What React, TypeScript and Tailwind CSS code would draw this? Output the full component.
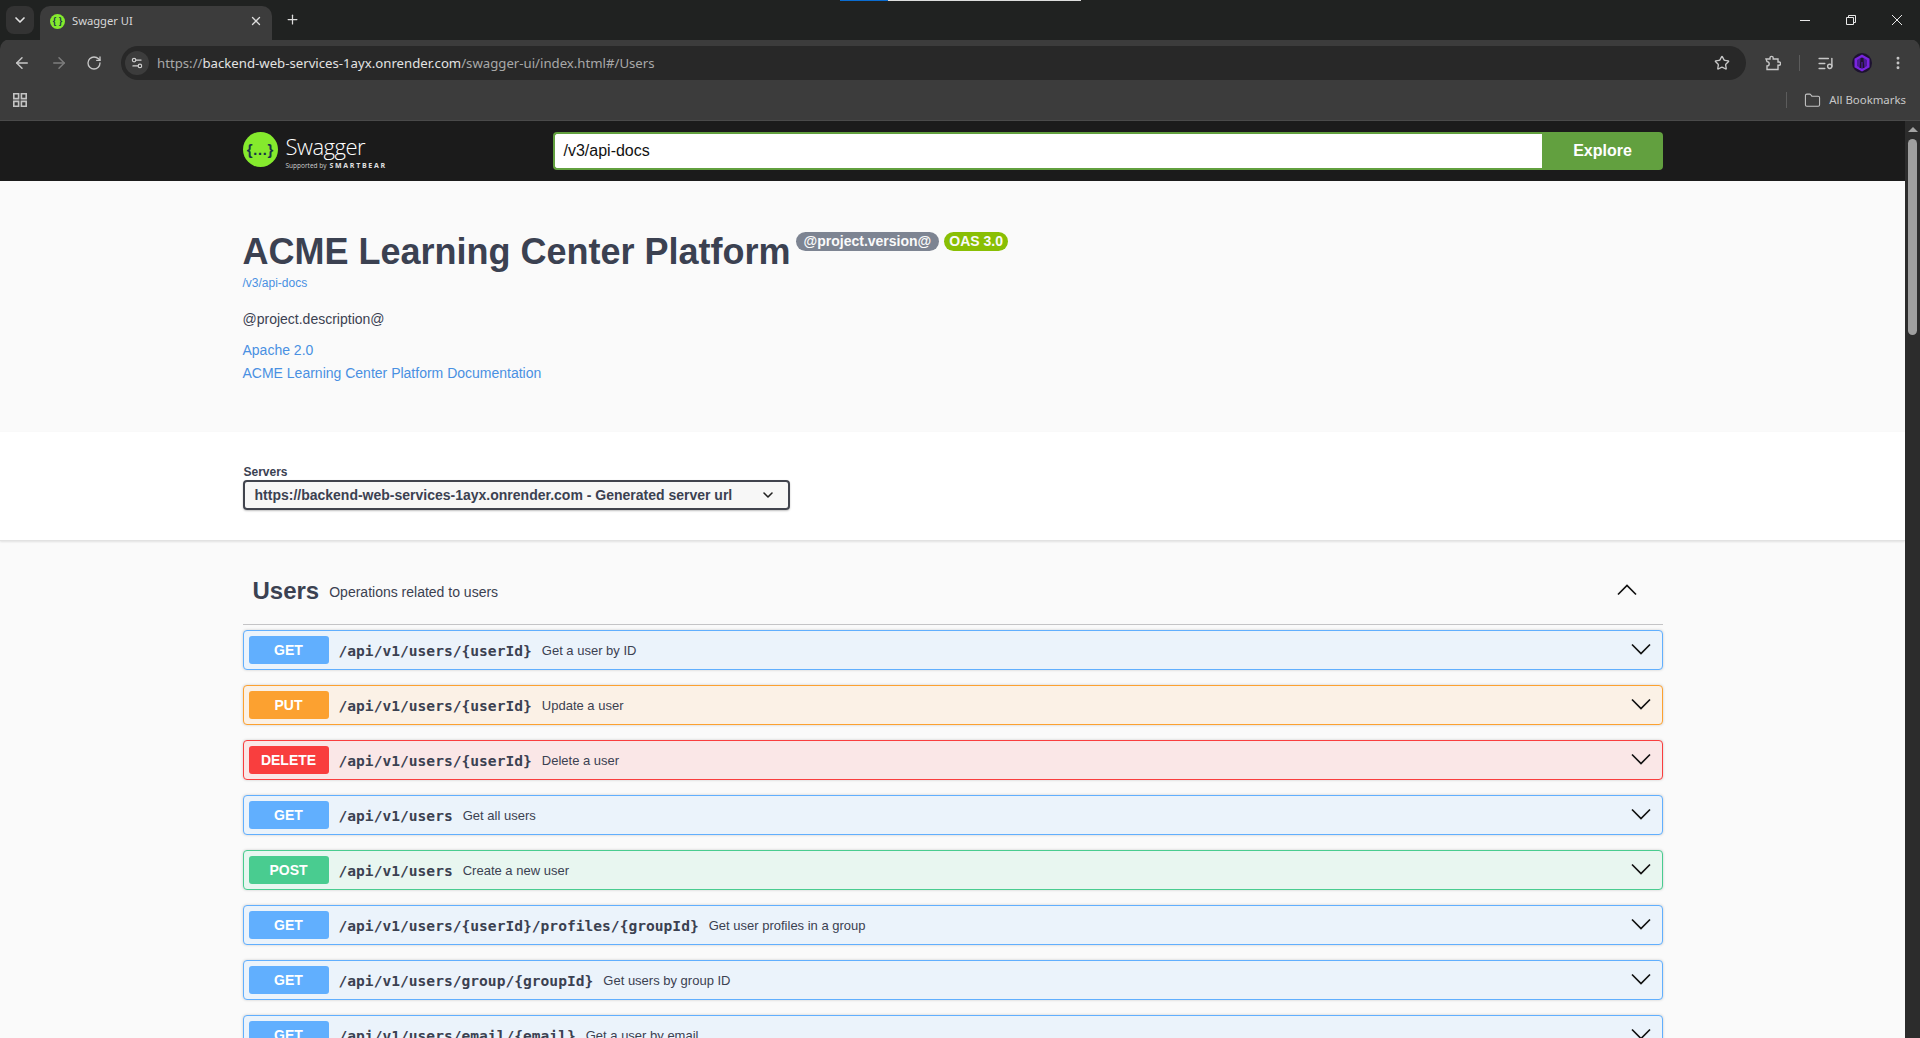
import {
  ArrowLeft,
  ArrowRight,
  ChevronDown,
  EllipsisVertical,
  Folder,
  ListMusic,
  Plus,
  RotateCw,
  Settings2,
  Star,
  X,
} from "lucide-react";

const sans = "font-['Liberation_Sans',Arial,sans-serif]";

const operations = [
  { method: "GET", path: "/api/v1/users/{userId}", summary: "Get a user by ID" },
  { method: "PUT", path: "/api/v1/users/{userId}", summary: "Update a user" },
  { method: "DELETE", path: "/api/v1/users/{userId}", summary: "Delete a user" },
  { method: "GET", path: "/api/v1/users", summary: "Get all users" },
  { method: "POST", path: "/api/v1/users", summary: "Create a new user" },
  { method: "GET", path: "/api/v1/users/{userId}/profiles/{groupId}", summary: "Get user profiles in a group" },
  { method: "GET", path: "/api/v1/users/group/{groupId}", summary: "Get users by group ID" },
  { method: "GET", path: "/api/v1/users/email/{email}", summary: "Get a user by email" },
];

const methodStyles: Record<string, { row: string; badge: string }> = {
  GET: { row: "border-[#61affe] bg-[#ebf3fb]", badge: "bg-[#61affe]" },
  PUT: { row: "border-[#fca130] bg-[#fbf1e6]", badge: "bg-[#fca130]" },
  DELETE: { row: "border-[#f93e3e] bg-[#fae7e7]", badge: "bg-[#f93e3e]" },
  POST: { row: "border-[#49cc90] bg-[#e8f6f0]", badge: "bg-[#49cc90]" },
};

function Chevron({ up = false }: { up?: boolean }) {
  return (
    <svg width="20" height="20" viewBox="0 0 20 20" fill="none" stroke="#111" strokeWidth="1.7">
      <path d={up ? "M1 14.5 L10 5.5 L19 14.5" : "M1 5.5 L10 14.5 L19 5.5"} />
    </svg>
  );
}

function Favicon() {
  return (
    <div className="flex h-[15px] w-[15px] items-center justify-center rounded-full bg-[#85ea2d]">
      <span className={`${sans} text-[9px] leading-none font-bold text-[#173647]`}>{"{ }"}</span>
    </div>
  );
}

function TabStrip() {
  return (
    <div className="relative flex h-10 shrink-0 items-start bg-[#202221]">
      <div className="absolute top-0 left-[840px] h-px w-12 bg-[#0a6cd0]" />
      <div className="absolute top-0 left-[888px] h-px w-[193px] bg-[#dedede]" />
      <div className="mt-1.5 ml-1.5 flex h-7 w-7 items-center justify-center rounded-lg bg-[#333333]">
        <ChevronDown className="h-4 w-4 text-[#e3e3e3]" strokeWidth={2.5} />
      </div>
      <div className="mt-1.5 ml-1.5 flex h-[34px] w-[232px] items-center rounded-t-[10px] bg-[#3c3c3c] pr-[9px] pb-[3px] pl-2.5">
        <Favicon />
        <span className="ml-[7px] flex-1 font-['Noto_Sans',sans-serif] text-[11.2px] text-[#d8d8d8]">Swagger UI</span>
        <X className="mb-0.5 h-3.5 w-3.5 text-[#dcdcdc]" strokeWidth={2.2} />
      </div>
      <Plus className="mt-3 ml-[13px] h-[15px] w-[15px] text-[#dcdcdc]" strokeWidth={2} />
      <div className="ml-auto flex h-10 items-center pr-[17px] text-[#e8e8e8]">
        <svg width="12" height="12" viewBox="0 0 12 12" fill="none" stroke="currentColor" className="mr-[34px]">
          <path d="M1 6.5 H11" />
        </svg>
        <svg width="12" height="12" viewBox="0 0 12 12" fill="none" stroke="currentColor" className="mr-[34px]">
          <path d="M1.5 3.5 H8.5 V10.5 H1.5 Z M3.5 3.5 V1.5 H10.5 V8.5 H8.5" />
        </svg>
        <svg width="12" height="12" viewBox="0 0 12 12" fill="none" stroke="currentColor">
          <path d="M1 1 L11 11 M11 1 L1 11" />
        </svg>
      </div>
    </div>
  );
}

function Avatar() {
  return (
    <svg width="20" height="20" viewBox="0 0 20 20">
      <circle cx="10" cy="10" r="10" fill="#1d1230" />
      <path d="M10 1.5 L17.5 5.8 V14.2 L10 18.5 L2.5 14.2 V5.8 Z" fill="#7a24e0" />
      <path d="M10 4 L15 6.9 V13.1 L10 16 L5 13.1 V6.9 Z" fill="#4b1a96" />
      <path d="M8.6 5 H11.4 L12.4 15 H10.7 V9 H9.3 V15 H7.6 Z" fill="#20122f" />
    </svg>
  );
}

function Toolbar() {
  return (
    <div className="-mt-px flex h-[47px] shrink-0 items-center rounded-t-[10px] bg-[#3c3c3c] pt-px pr-[14px] pl-[13px]">
      <ArrowLeft className="h-[18px] w-[18px] text-[#c7c7c7]" strokeWidth={2} />
      <ArrowRight className="ml-[19px] h-[18px] w-[18px] text-[#7d7d7d]" strokeWidth={2} />
      <RotateCw className="ml-[18px] h-[16px] w-[16px] text-[#c7c7c7]" strokeWidth={2} />
      <div className="ml-[19px] flex h-[34px] flex-1 items-center rounded-full bg-[#282828] pr-4 pl-1">
        <div className="flex h-6 w-6 items-center justify-center rounded-full bg-[#3c3c3c]">
          <Settings2 className="h-3.5 w-3.5 text-[#d0d0d0]" strokeWidth={2} />
        </div>
        <span className="ml-2 flex-1 pt-0.5 font-['Noto_Sans',sans-serif] text-[13.2px] text-[#a8a8a8]">
          https://<span className="text-[#e3e3e3]">backend-web-services-1ayx.onrender.com</span>/swagger-ui/index.html#/Users
        </span>
        <Star className="h-4 w-4 text-[#c7c7c7]" strokeWidth={2} />
      </div>
      <svg width="16" height="16" viewBox="0 0 16 16" fill="none" stroke="#c7c7c7" strokeWidth="1.4" className="ml-[19px]">
        <path d="M1 4 H5 V3 A1.6 1.6 0 0 1 8.2 3 V4 H13 V7 H14 A1.6 1.6 0 0 1 14 10.2 H13 V14.5 H2 V11 A2.2 2.2 0 0 0 2 6.6 Z" />
      </svg>
      <div className="ml-[18px] h-4 w-px bg-[#5c5c5c]" />
      <ListMusic className="ml-[17px] h-[17px] w-[17px] text-[#c7c7c7]" strokeWidth={2} />
      <div className="ml-[18px] flex items-center">
        <Avatar />
      </div>
      <EllipsisVertical className="ml-[18px] h-4 w-4 text-[#c7c7c7]" strokeWidth={2.4} />
    </div>
  );
}

function BookmarksBar() {
  return (
    <div className="flex h-[35px] shrink-0 items-center border-b border-[#4a4a4a] bg-[#3c3c3c] pr-[14px] pb-[6px] pl-[13px]">
      <svg width="14" height="14" viewBox="0 0 14 14" fill="none" stroke="#c4c4c4" strokeWidth="1.6">
        <path d="M0.8 0.8 H5.6 V5.6 H0.8 Z M8.4 0.8 H13.2 V5.6 H8.4 Z M0.8 8.4 H5.6 V13.2 H0.8 Z M8.4 8.4 H13.2 V13.2 H8.4 Z" />
      </svg>
      <div className="ml-auto h-4 w-px bg-[#5c5c5c]" />
      <Folder className="ml-[17px] h-[17px] w-[17px] text-[#c4c4c4]" strokeWidth={1.5} />
      <span className="ml-2 font-['Noto_Sans',sans-serif] text-[11.4px] text-[#c8c8c8]">All Bookmarks</span>
    </div>
  );
}

function Logo() {
  return (
    <div className="mb-1 flex items-center">
      <div className="flex h-[35px] w-[35px] items-center justify-center rounded-full bg-[#85ea2d]">
        <span className={`${sans} text-[15px] leading-none font-bold text-[#173647]`}>{"{…}"}</span>
      </div>
      <div className="mt-[6px] ml-2 flex flex-col">
        <span className="font-['Open_Sans',sans-serif] text-[22px] leading-[22px] font-light tracking-[-0.5px] text-white">
          Swagger
        </span>
        <span className="mt-1 flex items-baseline font-['Open_Sans',sans-serif] text-[6.5px] leading-[9px] text-[#d0d0d0]">
          Supported by
          <span className="ml-[3px] text-[7px] font-bold tracking-[1.7px] text-[#e0e0e0]">SMARTBEAR</span>
        </span>
      </div>
    </div>
  );
}

function SwaggerHeader() {
  return (
    <div className="h-[60px] shrink-0 bg-[#1b1b1b]">
      <div className="mx-auto flex h-full max-w-[1460px] items-center justify-between px-5">
        <Logo />
        <div className="flex h-[38px] w-[1110px]">
          <div className="flex flex-1 items-center rounded-l-[4px] border-2 border-r-0 border-[#62a03f] bg-white px-[9px] text-[16px] text-[#111]">
            /v3/api-docs
          </div>
          <div className="flex w-[121px] items-center justify-center rounded-r-[4px] bg-[#62a03f] pl-px text-[16px] font-bold text-white">
            Explore
          </div>
        </div>
      </div>
    </div>
  );
}

function Info() {
  return (
    <div className="h-[251px] bg-[#fafafa]">
      <div className="mx-auto max-w-[1460px] px-5 pt-[50px]">
        <div className="flex items-start">
          <h2 className="text-[36px] leading-[41px] font-bold text-[#3b4151]">ACME Learning Center Platform</h2>
          <span className="mt-px ml-[5px] rounded-[57px] bg-[#7d8492] px-2 py-0.5 text-[14px] leading-[15px] font-bold text-[#fafafa]">
            @project.version@
          </span>
          <span className="mt-px ml-[5px] rounded-[57px] bg-[#89bf04] px-[5px] py-0.5 text-[14px] leading-[15px] font-bold text-[#fafafa]">
            OAS 3.0
          </span>
        </div>
        <div className="mt-1 text-xs leading-[14px] text-[#4990e2]">/v3/api-docs</div>
        <div className="mt-[21px] text-sm leading-4 text-[#3b4151]">@project.description@</div>
        <div className="mt-[15px] text-sm leading-4 text-[#4990e2]">Apache 2.0</div>
        <div className="mt-[7px] text-sm leading-4 text-[#4990e2]">ACME Learning Center Platform Documentation</div>
      </div>
    </div>
  );
}

function Servers() {
  return (
    <div className="relative h-[109px] border-b border-[#e2e2e2] bg-white shadow-[0_1px_2px_rgba(0,0,0,0.1)]">
      <div className="mx-auto max-w-[1460px] px-5 pt-[33px]">
        <div className="pl-px text-xs leading-[14px] font-bold text-[#3b4151]">Servers</div>
        <div className="mt-px flex h-[30px] w-[547px] items-center justify-between rounded-[4px] border-2 border-[#41444e] bg-[#f7f7f7] pr-3 pl-[10px] shadow-[0_1px_2px_rgba(0,0,0,0.25)]">
          <span className="text-sm font-bold text-[#3b4151]">https://backend-web-services-1ayx.onrender.com - Generated server url</span>
          <ChevronDown className="h-4 w-4 text-[#222]" strokeWidth={2.4} />
        </div>
      </div>
    </div>
  );
}

function Operation({ method, path, summary }: { method: string; path: string; summary: string }) {
  const style = methodStyles[method];
  return (
    <div className={`mb-[15px] flex h-10 items-center rounded-[4px] border p-[5px] shadow-[0_0_3px_rgba(0,0,0,0.19)] ${style.row}`}>
      <span className={`flex h-7 w-20 items-center justify-center rounded-[3px] text-sm font-bold text-white ${style.badge}`}>
        {method}
      </span>
      <span className="ml-2.5 pt-0.5 font-['DejaVu_Sans_Mono',monospace] text-[14.6px] font-bold text-[#3b4151]">{path}</span>
      <span className="ml-2.5 flex-1 pt-0.5 text-[13px] text-[#3b4151]">{summary}</span>
      <div className="mr-[6px] mb-[3px]">
        <Chevron />
      </div>
    </div>
  );
}

function UsersTag() {
  return (
    <div className="mx-auto max-w-[1460px] px-5 pt-[30px]">
      <div className="flex h-[54px] items-center border-b border-[#c4c4c6] pr-[26px] pb-[13px] pl-2.5">
        <span className="text-2xl font-bold text-[#3b4151]">Users</span>
        <span className="ml-2.5 flex-1 pt-0.5 text-sm text-[#3b4151]">Operations related to users</span>
        <div className="mb-[3px]">
          <Chevron up />
        </div>
      </div>
      <div className="mt-[5px]">
        {operations.map((op, i) => (
          <Operation key={i} method={op.method} path={op.path} summary={op.summary} />
        ))}
      </div>
    </div>
  );
}

function Scrollbar() {
  return (
    <div className="flex w-[15px] shrink-0 flex-col items-center bg-[#2c2c2c] pt-[6px]">
      <div className="h-0 w-0 border-x-[5px] border-b-[5px] border-x-transparent border-b-[#a3a3a3]" />
      <div className="mt-[7px] h-[196px] w-[9px] rounded-full bg-[#9f9f9f]" />
    </div>
  );
}

export default function App() {
  return (
    <div className={`flex h-[1038px] flex-col overflow-hidden bg-[#202221] ${sans}`}>
      <TabStrip />
      <Toolbar />
      <BookmarksBar />
      <div className="flex min-h-0 flex-1">
        <div className="min-w-0 flex-1 overflow-hidden bg-[#fafafa]">
          <SwaggerHeader />
          <Info />
          <Servers />
          <UsersTag />
        </div>
        <Scrollbar />
      </div>
    </div>
  );
}
